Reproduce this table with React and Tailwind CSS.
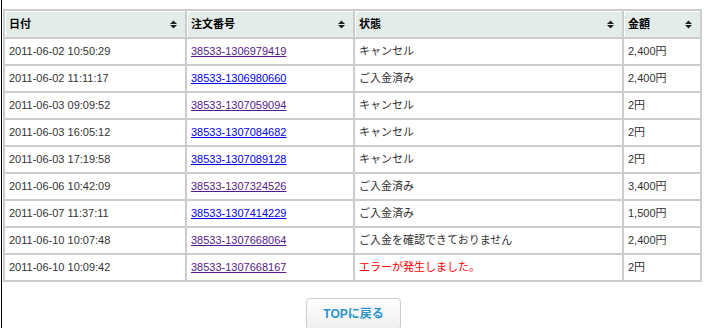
const rows = [
  { date: '2011-06-02 10:50:29', no: '38533-1306979419', visited: true, status: 'キャンセル', amount: '2,400円' },
  { date: '2011-06-02 11:11:17', no: '38533-1306980660', visited: false, status: 'ご入金済み', amount: '2,400円' },
  { date: '2011-06-03 09:09:52', no: '38533-1307059094', visited: true, status: 'キャンセル', amount: '2円' },
  { date: '2011-06-03 16:05:12', no: '38533-1307084682', visited: false, status: 'キャンセル', amount: '2円' },
  { date: '2011-06-03 17:19:58', no: '38533-1307089128', visited: false, status: 'キャンセル', amount: '2円' },
  { date: '2011-06-06 10:42:09', no: '38533-1307324526', visited: true, status: 'ご入金済み', amount: '3,400円' },
  { date: '2011-06-07 11:37:11', no: '38533-1307414229', visited: false, status: 'ご入金済み', amount: '1,500円' },
  { date: '2011-06-10 10:07:48', no: '38533-1307668064', visited: true, status: 'ご入金を確認できておりません', amount: '2,400円' },
  { date: '2011-06-10 10:09:42', no: '38533-1307668167', visited: true, status: 'エラーが発生しました。', amount: '2円', error: true },
];

function SortIcon() {
  return (
    <svg width="7" height="9" viewBox="0 0 7 9" className="shrink-0">
      <polygon points="0,4 3.5,0.5 7,4" fill="#222" />
      <polygon points="0,5 7,5 3.5,8.5" fill="#222" />
    </svg>
  );
}

function Th({ label, width }) {
  return (
    <th
      className={`${width} h-[28px] border-l-2 border-t-2 border-[#cccccc] bg-[#e4ecea] pl-1 pr-2 text-left align-middle shadow-[inset_1px_1px_0_#fff]`}
    >
      <div className="flex items-center justify-between">
        <span className="text-[11px] font-bold text-black">{label}</span>
        <SortIcon />
      </div>
    </th>
  );
}

export default function App() {
  return (
    <div
      className="ml-px h-[328px] border-l border-black pl-px pt-[9px]"
      style={{ fontFamily: '"Liberation Sans", Arial, "Noto Sans CJK JP", sans-serif' }}
    >
      <table className="w-[699px] table-fixed border-separate border-spacing-0 border-r-2 border-b-2 border-[#cccccc] text-[11px] text-[#333]">
        <thead>
          <tr>
            <Th label="日付" width="w-[182px]" />
            <Th label="注文番号" width="w-[168px]" />
            <Th label="状態" width="w-[269px]" />
            <Th label="金額" width="w-[78px]" />
          </tr>
        </thead>
        <tbody>
          {rows.map((r) => (
            <tr key={r.no}>
              <td className="h-[27px] border-l-2 border-t-2 border-[#cccccc] pl-1 align-middle">{r.date}</td>
              <td className="border-l-2 border-t-2 border-[#cccccc] pl-1 align-middle">
                <a href="#" className={`underline ${r.visited ? 'text-[#551a8b]' : 'text-[#0000ee]'}`}>
                  {r.no}
                </a>
              </td>
              <td className={`border-l-2 border-t-2 border-[#cccccc] pl-1 align-middle ${r.error ? 'text-[#ff0000]' : ''}`}>
                {r.status}
              </td>
              <td className="border-l-2 border-t-2 border-[#cccccc] pl-1 align-middle">{r.amount}</td>
            </tr>
          ))}
        </tbody>
      </table>

      {/* Back button */}
      <div className="mt-4 flex justify-center">
        <button className="h-[32px] rounded-[4px] border border-[#cccccc] bg-gradient-to-b from-white to-[#efefef] px-4 text-[12px] font-bold text-[#2a95cf]">
          TOPに戻る
        </button>
      </div>
    </div>
  );
}
